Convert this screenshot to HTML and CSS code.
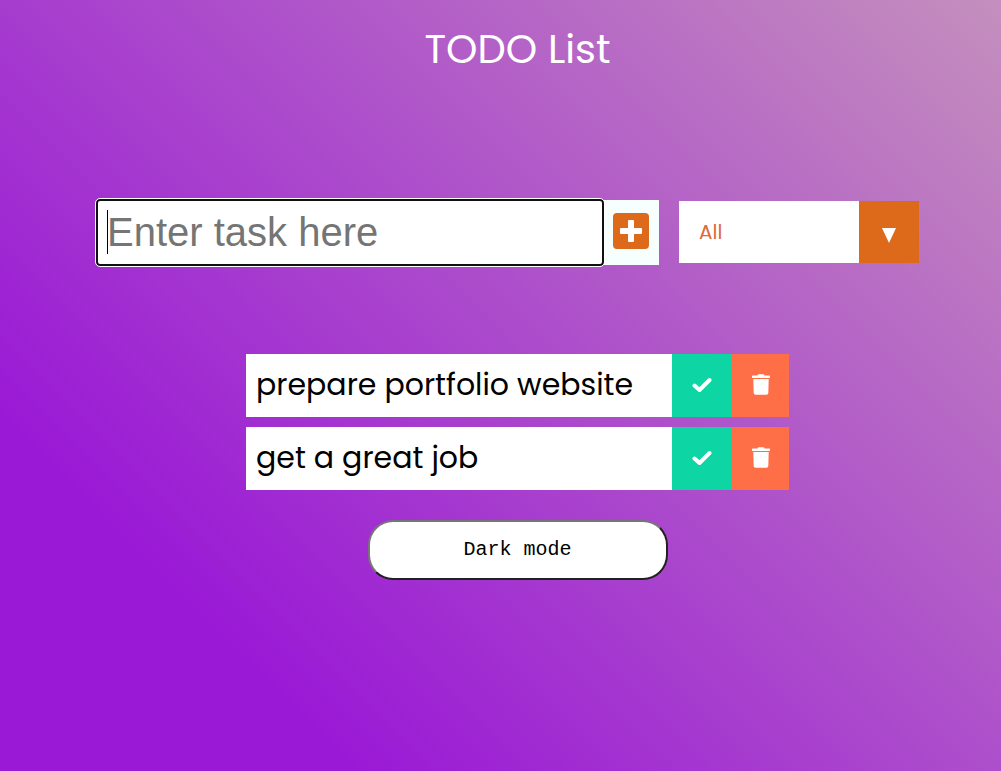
FILE: index.html
```html
<!DOCTYPE html>
<html lang="en">
<head>
  <meta charset="utf-8">
  <meta name="viewport" content="width=device-width, initial-scale=1">
  <title>TODO List</title>
  <link rel="stylesheet" href="styles.css">
</head>
<body>
  <header class="header"><h1 class="title">TODO List</h1></header>
  <main>
    <form class="todo-form">
      <div class="entry">
        <input class="todo-input" type="text" placeholder="Enter task here" aria-label="New task">
        <span class="caret" aria-hidden="true"></span>
      </div>
      <button class="add-button" type="submit" aria-label="Add task">
        <svg width="36" height="36" viewBox="0 0 36 36"><rect width="36" height="36" rx="4" fill="#dd6a1a"/><path fill="#fff" d="M16 7h4q1 0 1 1v7h7q1 0 1 1v4q0 1-1 1h-7v7q0 1-1 1h-4q-1 0-1-1v-7H8q-1 0-1-1v-4q0-1 1-1h7V8q0-1 1-1z"/></svg>
      </button>
      <div class="filter">
        <select class="filter-select" aria-label="Filter tasks">
          <option>All</option>
          <option>Completed</option>
          <option>Uncompleted</option>
        </select>
        <span class="filter-arrow" aria-hidden="true"><svg width="14" height="15" viewBox="0 0 14 15"><path fill="#fff" d="M0 0h14L7 15z"/></svg></span>
      </div>
    </form>
    <ul class="todo-list">
      <li class="todo">
        <span class="todo-text">prepare portfolio website</span>
        <button class="complete-button" type="button" aria-label="Complete task"><svg width="20" height="20" viewBox="0 0 20 20"><path fill="none" stroke="#fff" stroke-width="4" stroke-linecap="round" stroke-linejoin="round" d="M2.500 10.500l5 4.500L17.500 5"/></svg></button>
        <button class="trash-button" type="button" aria-label="Delete task"><svg width="18" height="21" viewBox="0 0 448 512"><path fill="#fff" d="M432 32H312l-9.400-18.700A24 24 0 0 0 281.100 0H166.800a23.720 23.720 0 0 0-21.400 13.300L136 32H16A16 16 0 0 0 0 48v32a16 16 0 0 0 16 16h416a16 16 0 0 0 16-16V48a16 16 0 0 0-16-16zM42 467a48 48 0 0 0 48 45h268a48 48 0 0 0 48-45L416 116H32z"/></svg></button>
      </li>
      <li class="todo">
        <span class="todo-text">get a great job</span>
        <button class="complete-button" type="button" aria-label="Complete task"><svg width="20" height="20" viewBox="0 0 20 20"><path fill="none" stroke="#fff" stroke-width="4" stroke-linecap="round" stroke-linejoin="round" d="M2.500 10.500l5 4.500L17.500 5"/></svg></button>
        <button class="trash-button" type="button" aria-label="Delete task"><svg width="18" height="21" viewBox="0 0 448 512"><path fill="#fff" d="M432 32H312l-9.400-18.700A24 24 0 0 0 281.100 0H166.800a23.720 23.720 0 0 0-21.400 13.300L136 32H16A16 16 0 0 0 0 48v32a16 16 0 0 0 16 16h416a16 16 0 0 0 16-16V48a16 16 0 0 0-16-16zM42 467a48 48 0 0 0 48 45h268a48 48 0 0 0 48-45L416 116H32z"/></svg></button>
      </li>
    </ul>
    <button class="mode-button" type="button">Dark mode</button>
  </main>
</body>
</html>
```
FILE: styles.css
```css
* {
  margin: 0;
  padding: 0;
  box-sizing: border-box;
}

body {
  min-height: 100vh;
  padding-left: 34px;
  background: linear-gradient(45deg, #9a19d6 20%, #c48fbd);
  font-family: Poppins, Inter, sans-serif;
}

svg {
  display: block;
}

.header {
  display: flex;
  justify-content: center;
  padding-top: 20px;
}

.title {
  color: #fff;
  font-size: 40px;
  font-weight: 400;
  line-height: 58px;
}

.todo-form {
  display: flex;
  align-items: center;
  justify-content: center;
  padding: 121px 20px 0 0;
}

.entry {
  position: relative;
  flex: 0 1 508px;
}

.todo-input {
  display: block;
  width: 100%;
  height: 67px;
  padding: 0 9px;
  border: 2px solid #101010;
  border-radius: 4px;
  outline: 1px solid #fff;
  background: #fff;
  font: 40px "Liberation Sans", Arial, sans-serif;
}

.todo-input::placeholder {
  color: #757575;
  opacity: 1;
}

.caret {
  position: absolute;
  top: 11px;
  left: 11px;
  width: 1px;
  height: 44px;
  background: #000;
}

.add-button {
  display: flex;
  align-items: center;
  width: 55px;
  height: 65px;
  padding: 0 0 3px 9px;
  border: 0;
  background: #f7fffe;
}

.filter {
  position: relative;
  display: flex;
  width: 240px;
  margin: 0 0 2px 20px;
}

.filter-select {
  width: 100%;
  height: 62px;
  padding: 0 80px 0 20px;
  appearance: none;
  border: 0;
  border-radius: 0;
  background: #fff;
  color: #dd6a3a;
  font: inherit;
  font-size: 20px;
}

.filter-arrow {
  position: absolute;
  top: 0;
  right: 0;
  bottom: 0;
  display: flex;
  align-items: center;
  justify-content: center;
  width: 60px;
  padding-top: 8px;
  background: #dd6a1a;
  pointer-events: none;
}

.todo-list {
  display: flex;
  flex-direction: column;
  gap: 10px;
  width: 543px;
  max-width: 100%;
  margin: 88px auto 30px;
  list-style: none;
}

.todo {
  display: flex;
  min-height: 63px;
  background: #fff;
}

.todo-text {
  flex: 1;
  padding: 0 10px;
  color: #000;
  font-size: 30px;
  line-height: 62px;
}

.complete-button,
.trash-button {
  display: flex;
  align-items: center;
  justify-content: center;
  padding-bottom: 2px;
  border: 0;
}

.complete-button {
  width: 60px;
  background: #0dd6a4;
}

.trash-button {
  width: 57px;
  background: #ff6f47;
}

.mode-button {
  display: block;
  width: 300px;
  height: 60px;
  margin: 0 auto;
  padding-bottom: 2px;
  border: 2px solid;
  border-color: #767676 #212121 #212121 #767676;
  border-radius: 25px;
  background: #fff;
  color: #000;
  font: 20px "Liberation Mono", "Courier New", monospace;
}
```
